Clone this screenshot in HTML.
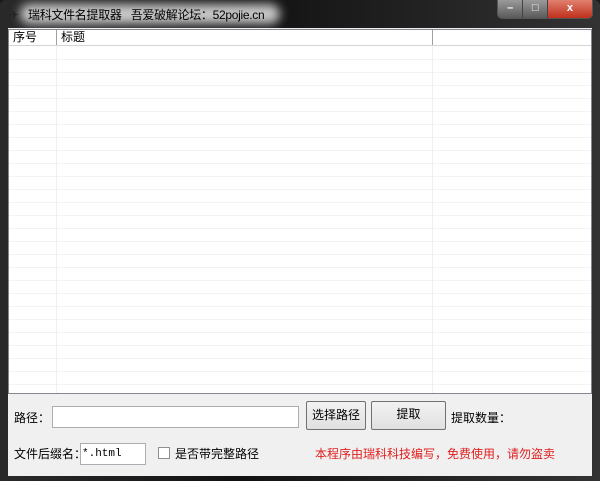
<!DOCTYPE html>
<html><head><meta charset="utf-8"><style>
*{margin:0;padding:0;box-sizing:border-box}
body{width:600px;height:481px;overflow:hidden;background:#1a1a1a;font-family:"Liberation Sans","Noto Sans CJK SC",sans-serif;font-size:12px;position:relative}
.frame{position:absolute;left:0;top:0;width:600px;height:481px;background:linear-gradient(90deg,#2a2a2a,#111 40%,#333);border-radius:6px 6px 0 0}
.title{position:absolute;left:0;top:0;width:300px;height:28px;}
.glow{position:absolute;left:20px;top:4px;width:260px;height:20px;background:rgba(220,220,220,.9);border-radius:10px;filter:blur(5px)}
.tt{position:absolute;left:28px;top:6px;color:#000;font-size:12px;white-space:nowrap;letter-spacing:-0.3px}
.icon{position:absolute;left:9px;top:8px;font-size:12px;color:#222}
.btns{position:absolute;left:497px;top:0;width:96px;height:19px;border:1px solid #555;border-top:none;border-radius:0 0 5px 5px;overflow:hidden;display:flex}
.b{height:18px;background:linear-gradient(#9a9a9a,#5a5a5a);border-right:1px solid #444;color:#fff;text-align:center;font-size:11px;line-height:17px;font-weight:bold}
.client{position:absolute;left:8px;top:28px;width:584px;height:448px;background:#f0f0f0}
.lv{position:absolute;left:0;top:1px;width:584px;height:365px;border:1px solid #828790;background:#fff;
background-image:repeating-linear-gradient(#fff 0 12px,#f3f3f3 12px 13px);background-position:0 17px}
.hdr{position:absolute;left:0;top:0;width:582px;height:16px;background:#fff;border-bottom:1px solid #d5d5d5;font-size:12px;line-height:15px}
.c{position:absolute;top:0;height:15px;border-right:1px solid #a0a0a0;padding-left:4px}
.vl{position:absolute;top:16px;bottom:0;width:1px;background:#f0f0f0}
.lab{position:absolute;font-size:12px;color:#000}
.in{position:absolute;background:#fff;border:1px solid #abadb3}
.bt{position:absolute;border:1px solid #707070;border-radius:2px;background:linear-gradient(#f2f2f2,#e0e0e0);text-align:center;font-size:12px}
</style></head><body>
<div class="frame"></div>
<div class="title"><div class="glow"></div><span class="icon">✈</span><span class="tt">瑞科文件名提取器&nbsp;&nbsp;&nbsp;吾爱破解论坛：52pojie.cn</span></div>
<div class="btns"><div class="b" style="width:26px">–</div><div class="b" style="width:25px">□</div><div class="b" style="width:45px;background:linear-gradient(#e08070,#c0301c);border:none">x</div></div>
<div class="client">
<div class="lv">
<div class="hdr"><div class="c" style="left:0;width:48px">序号</div><div class="c" style="left:48px;width:376px">标题</div></div>
<div class="vl" style="left:47px"></div><div class="vl" style="left:423px"></div>
</div>
<div class="lab" style="left:6px;top:381px">路径：</div>
<div class="in" style="left:44px;top:378px;width:247px;height:22px"></div>
<div class="bt" style="left:298px;top:373px;width:60px;height:29px;line-height:27px">选择路径</div>
<div class="bt" style="left:363px;top:373px;width:75px;height:29px;line-height:24px">提取</div>
<div class="lab" style="left:443px;top:381px">提取数量：</div>
<div class="lab" style="left:6px;top:417px">文件后缀名：</div>
<div class="in" style="left:72px;top:415px;width:66px;height:22px;font-family:'Liberation Mono',monospace;font-size:11px;line-height:20px;padding-left:1px">*.html</div>
<div style="position:absolute;left:150px;top:419px;width:12px;height:12px;border:1px solid #8e8f8f;background:#fff"></div>
<div class="lab" style="left:167px;top:417px">是否带完整路径</div>
<div class="lab" style="left:307px;top:417px;color:#e02020">本程序由瑞科科技编写，免费使用，请勿盗卖</div>
</div>
</body></html>
